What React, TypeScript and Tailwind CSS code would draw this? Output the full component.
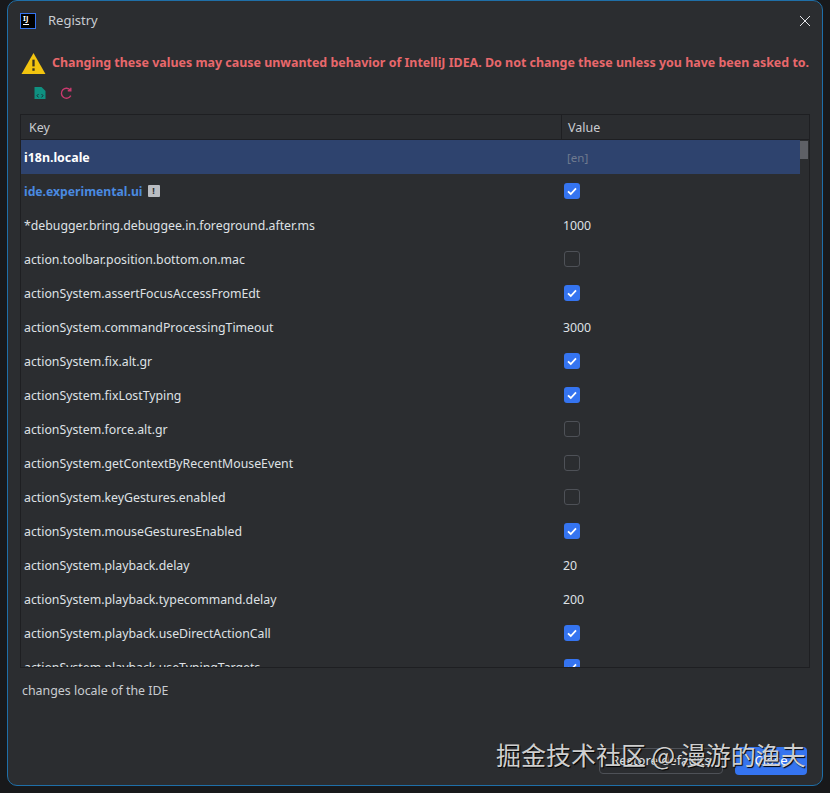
const rows: { k: string; v?: string; c?: boolean }[] = [
  { k: "*debugger.bring.debuggee.in.foreground.after.ms", v: "1000" },
  { k: "action.toolbar.position.bottom.on.mac", c: false },
  { k: "actionSystem.assertFocusAccessFromEdt", c: true },
  { k: "actionSystem.commandProcessingTimeout", v: "3000" },
  { k: "actionSystem.fix.alt.gr", c: true },
  { k: "actionSystem.fixLostTyping", c: true },
  { k: "actionSystem.force.alt.gr", c: false },
  { k: "actionSystem.getContextByRecentMouseEvent", c: false },
  { k: "actionSystem.keyGestures.enabled", c: false },
  { k: "actionSystem.mouseGesturesEnabled", c: true },
  { k: "actionSystem.playback.delay", v: "20" },
  { k: "actionSystem.playback.typecommand.delay", v: "200" },
  { k: "actionSystem.playback.useDirectActionCall", c: true },
  { k: "actionSystem.playback.useTypingTargets", c: true },
];

function Check({ on }: { on: boolean }) {
  if (!on)
    return <div className="w-4 h-4 rounded-[3px] border border-[#4e5157] bg-[#2b2d30]" />;
  return (
    <div className="w-4 h-4 rounded-[3px] bg-[#3574f0] flex items-center justify-center">
      <svg width="12" height="12" viewBox="0 0 12 12" fill="none">
        <path d="M2 6.3 L4.8 9 L10 3.4" stroke="#fff" strokeWidth="1.8" />
      </svg>
    </div>
  );
}

export default function App() {
  return (
    <div
      className="relative w-[830px] h-[793px] bg-[#18191b] overflow-hidden pl-[7px] pr-[7px] text-[13px] text-[#dfe1e5]"
      style={{ fontFamily: '"Noto Sans", sans-serif' }}
    >
      <div className="w-[816px] h-[786px] rounded-[10px] border border-[#1f6fa8] bg-[#2b2d30] flex flex-col">
        <div className="h-[40px] flex items-center pl-[12px] pr-[11px] shrink-0">
          <div className="w-4 h-4 bg-black border border-[#3574f0] flex flex-col px-[2px] pt-[1px]">
            <div className="text-white text-[7.5px] leading-[7px] font-bold">IJ</div>
            <div className="w-[6px] h-px bg-white mt-[2px]" />
          </div>
          <div className="ml-3 text-[13px] text-[#c9ccd1]">Registry</div>
          <svg className="ml-auto" width="12" height="12" viewBox="0 0 12 12" fill="none">
            <path d="M1 1 L11 11 M11 1 L1 11" stroke="#e4e6ea" strokeWidth="1" />
          </svg>
        </div>
        <div className="flex items-center pl-[13px] h-[36px] mt-[4px] shrink-0">
          <svg width="25" height="23" viewBox="0 0 26 24">
            <path d="M13 1 L25.5 23 L0.5 23 Z" fill="#f2c40f" />
            <rect x="11.8" y="8" width="2.4" height="7" fill="#3a3320" />
            <rect x="11.8" y="17" width="2.4" height="2.6" fill="#3a3320" />
          </svg>
          <div className="ml-[6px] text-[#e8686c] font-bold text-[12.45px] whitespace-nowrap">
            Changing these values may cause unwanted behavior of IntelliJ IDEA. Do not change these unless you have been asked to.
          </div>
        </div>
        <div className="flex items-center h-[24px] pl-[26px] gap-[14px] shrink-0">
          <svg width="12" height="14" viewBox="0 0 12 14">
            <path d="M0.5 1 H7.5 L11.5 5 V13 H0.5 Z" fill="#0f9080" />
            <path d="M4.5 8 L3 9.7 L4.5 11.4 M7.5 8 L9 9.7 L7.5 11.4" stroke="#17333a" strokeWidth="1" fill="none" />
          </svg>
          <svg width="13" height="13" viewBox="0 0 13 13" fill="none">
            <path d="M10.8 8.6 A5 5 0 1 1 10.4 3.2 M10.8 0.8 V3.8 H7.8" stroke="#c93a6e" strokeWidth="1.4" />
          </svg>
        </div>
        <div className="ml-[12px] w-[790px] h-[554px] mt-[9px] border border-[#1e1f22] overflow-hidden shrink-0">
          <div className="flex h-[25px] border-b border-[#1e1f22]">
            <div className="w-[541px] border-r border-[#1e1f22] pl-2 pt-[2px] flex items-center text-[#c9ccd1] text-[12.5px]">Key</div>
            <div className="pl-[6px] pt-[2px] flex items-center text-[#c9ccd1] text-[12.5px]">Value</div>
          </div>
          <div className="relative">
            <div className="absolute right-px top-px w-2 h-[18px] bg-[#5e6066]" />
            <div className="flex h-[34px] w-[779px] items-center bg-[#2e436e]">
              <div className="w-[543px] pl-[3px] pt-[2px] font-bold text-white text-[12.4px]">i18n.locale</div>
              <div className="pl-[3px] pt-[2px] text-[#6f7a8f] text-[11.5px]">[en]</div>
            </div>
            <div className="flex h-[34px] items-center">
              <div className="w-[543px] pl-[3px] flex items-center gap-[5px]">
                <span className="font-bold text-[#4a8ae0] text-[12.2px] pt-[2px]">ide.experimental.ui</span>
                <span className="w-3 h-3 bg-[#b9bcc1] rounded-[1px] flex items-center justify-center text-[#2b2d30] text-[9px] font-bold leading-none">!</span>
              </div>
              <Check on={true} />
            </div>
            {rows.map((r) => (
              <div key={r.k} className="flex h-[34px] items-center">
                <div className="w-[543px] pl-[3px] pt-[2px] text-[12.3px] text-[#dfe1e5] whitespace-nowrap">{r.k}</div>
                {r.v ? <div className="text-[12.3px] pt-[2px] -ml-[1px]">{r.v}</div> : <Check on={!!r.c} />}
              </div>
            ))}
          </div>
        </div>
        <div className="pl-[14px] mt-[14px] text-[12.4px] text-[#c9ccd1]">changes locale of the IDE</div>
        <div className="mt-auto mb-[10px] flex justify-end items-center pr-[15px] gap-[12px]">
          <button className="w-[124px] h-[26px] rounded-[4px] border border-[#4e5157] text-[#dfe1e5] text-[13px]">Restore defaults</button>
          <button className="w-[72px] h-[28px] rounded-[4px] bg-[#3574f0] text-white text-[13px]">Close</button>
        </div>
      </div>
      <div
        className="absolute left-[496px] top-[736px] text-[25px] leading-[36px] text-[#cfcfcf] whitespace-nowrap"
        style={{ fontFamily: '"Noto Sans CJK SC", sans-serif', textShadow: "1px 1px 1px #000" }}
      >
        掘金技术社区 @ 漫游的渔夫
      </div>
    </div>
  );
}
